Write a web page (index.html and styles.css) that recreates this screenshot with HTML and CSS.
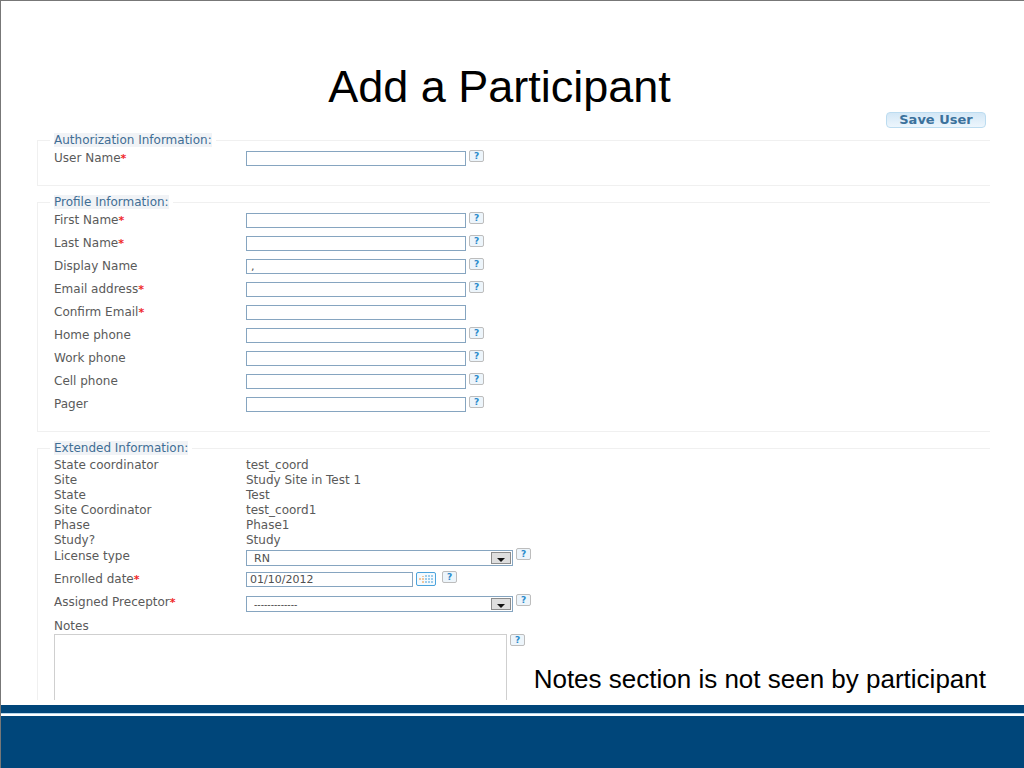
FILE: index.html
```html
<!DOCTYPE html>
<html lang="en">
<head>
<meta charset="utf-8">
<title>Add a Participant</title>
<link rel="stylesheet" href="styles.css">
</head>
<body>
<main class="slide">
  <h1 class="title">Add a Participant</h1>
  <form class="form">
    <div class="actions"><button class="save" type="button">Save User</button></div>

    <fieldset class="group">
      <legend>Authorization Information:</legend>
      <div class="row"><label for="user">User Name<b>*</b></label><input class="field" id="user" type="text"><button class="help" type="button">?</button></div>
    </fieldset>

    <fieldset class="group">
      <legend>Profile Information:</legend>
      <div class="row"><label for="first">First Name<b>*</b></label><input class="field" id="first" type="text"><button class="help" type="button">?</button></div>
      <div class="row"><label for="last">Last Name<b>*</b></label><input class="field" id="last" type="text"><button class="help" type="button">?</button></div>
      <div class="row"><label for="display">Display Name</label><input class="field" id="display" type="text" value=","><button class="help" type="button">?</button></div>
      <div class="row"><label for="email">Email address<b>*</b></label><input class="field" id="email" type="text"><button class="help" type="button">?</button></div>
      <div class="row"><label for="confirm">Confirm Email<b>*</b></label><input class="field" id="confirm" type="text"></div>
      <div class="row"><label for="home">Home phone</label><input class="field" id="home" type="text"><button class="help" type="button">?</button></div>
      <div class="row"><label for="work">Work phone</label><input class="field" id="work" type="text"><button class="help" type="button">?</button></div>
      <div class="row"><label for="cell">Cell phone</label><input class="field" id="cell" type="text"><button class="help" type="button">?</button></div>
      <div class="row"><label for="pager">Pager</label><input class="field" id="pager" type="text"><button class="help" type="button">?</button></div>
    </fieldset>

    <fieldset class="group">
      <legend>Extended Information:</legend>
      <dl class="facts">
        <dt>State coordinator</dt><dd>test_coord</dd>
        <dt>Site</dt><dd>Study Site in Test 1</dd>
        <dt>State</dt><dd>Test</dd>
        <dt>Site Coordinator</dt><dd>test_coord1</dd>
        <dt>Phase</dt><dd>Phase1</dd>
        <dt>Study?</dt><dd>Study</dd>
      </dl>
      <div class="row">
        <label for="license">License type</label>
        <span class="select"><select id="license"><option>RN</option></select><svg class="arrow" viewBox="0 0 20 12"><rect x=".5" y=".5" width="19" height="11"/><path d="M6 6h8l-4 4z"/></svg></span>
        <button class="help" type="button">?</button>
      </div>
      <div class="row">
        <label for="date">Enrolled date<b>*</b></label>
        <input class="field date" id="date" type="text" value="01/10/2012">
        <button class="calendar" type="button" aria-label="Choose date"><svg viewBox="0 0 14 8"><path class="warm" d="M3 1h2v1H3zM0 3h2v2H0zM3 3h2v2H3zM3 6h2v2H3z"/><path class="cool" d="M6 0h2v2H6zM9 0h2v2H9zM12 0h2v2h-2zM6 3h2v2H6zM9 3h2v2H9zM12 3h2v2h-2zM6 6h2v2H6zM9 6h2v2H9zM12 6h2v2h-2z"/></svg></button>
        <button class="help" type="button">?</button>
      </div>
      <div class="row">
        <label for="preceptor">Assigned Preceptor<b>*</b></label>
        <span class="select"><select id="preceptor" class="dashes"><option>-------------</option></select><svg class="arrow" viewBox="0 0 20 12"><rect x=".5" y=".5" width="19" height="11"/><path d="M6 6h8l-4 4z"/></svg></span>
        <button class="help" type="button">?</button>
      </div>
      <label class="notes-label" for="notes">Notes</label>
      <div class="notes"><textarea id="notes"></textarea><button class="help" type="button">?</button></div>
    </fieldset>
  </form>
  <p class="caption">Notes section is not seen by participant</p>
  <footer class="band"></footer>
</main>
</body>
</html>
```
FILE: styles.css
```css
* { box-sizing: border-box; }
body { margin: 0; background: #fff; }

.slide {
  position: relative;
  display: flex;
  flex-direction: column;
  height: 100vh;
  overflow: hidden;
  border-top: 1px solid #777;
  border-left: 1px solid #777;
  font: 12px/16px "DejaVu Sans", sans-serif;
  color: #5a5a5a;
}
.title {
  margin: 0;
  padding: 60px 26px 0 0;
  font: 45px/51px "Liberation Sans", Arial, sans-serif;
  text-align: center;
  color: #000;
}
.form {
  flex: 1 1 0;
  min-height: 0;
  overflow: hidden;
  padding: 0 34px 0 36px;
  margin-bottom: 5px;
}
.actions { display: flex; justify-content: flex-end; padding: 0 4px 5px 0; }
.save {
  width: 100px;
  height: 16px;
  padding: 0;
  border: 1px solid #bcdcf0;
  border-radius: 4px;
  background: linear-gradient(#d3e7f6, #edf6fd);
  color: #3b719c;
  font: bold 13px/14px "DejaVu Sans", sans-serif;
}

.group {
  min-width: 0;
  margin: 0 0 9px;
  padding: 3px 0 12px 16px;
  border: 1px solid #f0f0f0;
  border-right: 0;
}
.group legend {
  padding: 0;
  background: #f1f3f6;
  box-shadow: -4px 0 #fff, 4px 0 #fff;
  line-height: 14px;
  color: #3f6e95;
}
.row { display: flex; align-items: flex-start; height: 23px; }
.row label { flex: 0 0 192px; }
b { color: #f02828; font-size: 11px; }

.field, .select select {
  height: 15px;
  margin: 1px 0 0;
  border: 1px solid #86a5c0;
  border-radius: 0;
  background: #fff;
  color: #505050;
  font: inherit;
  font-size: 11px;
  line-height: 13px;
}
.field { width: 220px; padding: 0 4px; }
.date { width: 167px; padding: 0 3px; }

.help {
  flex: none;
  width: 15px;
  height: 12px;
  margin: 0 0 0 3px;
  padding: 0;
  border: 1px solid #bdbdbd;
  border-radius: 2px;
  background: #edf5fb;
  color: #2b8bcb;
  font: bold 9px/10px "DejaVu Sans", sans-serif;
}

.facts {
  display: grid;
  grid-template-columns: 192px 1fr;
  margin: 0;
  line-height: 15px;
}
.facts dd { margin: 0; }

.select { display: grid; align-items: center; width: 267px; margin-top: 2px; }
.select select {
  grid-area: 1 / 1;
  appearance: none;
  width: 100%;
  height: 16px;
  margin: 0;
  padding: 0 24px 0 7px;
}
.select .dashes { font-family: "Liberation Sans", Arial, sans-serif; font-size: 10px; }
.arrow {
  grid-area: 1 / 1;
  justify-self: end;
  width: 20px;
  height: 12px;
  margin-right: 2px;
  pointer-events: none;
}
.arrow rect { fill: #dedede; stroke: #8c8c8c; }
.arrow path { fill: #111; }

.calendar {
  display: grid;
  place-items: center;
  width: 20px;
  height: 14px;
  margin: 1px 3px 0;
  padding: 0;
  border: 1px solid #4ba3dc;
  border-radius: 2px;
  background: #f4fafe;
}
.calendar svg { width: 14px; height: 8px; }
.warm { fill: #f0c69c; }
.cool { fill: #9dcdec; }

.notes-label { display: block; margin-top: 1px; }
.notes { display: flex; align-items: flex-start; }
.notes textarea {
  width: 453px;
  height: 120px;
  border: 1px solid #cfcfcf;
  resize: none;
  font: inherit;
}

.caption {
  position: absolute;
  right: 38px;
  bottom: 74px;
  margin: 0;
  font: 26px/30px "Liberation Sans", Arial, sans-serif;
  color: #000;
}

.band {
  flex: none;
  height: 63px;
  margin-left: -1px;
  background: linear-gradient(#00467a 8px, #b5d6ec 8px 9px, #fff 9px 11px, #00467a 11px);
}
```
